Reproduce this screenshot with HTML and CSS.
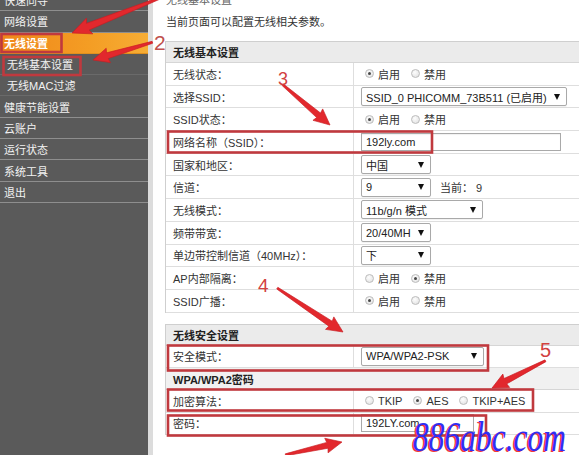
FILE: index.html
```html
<!DOCTYPE html>
<html lang="zh-CN">
<head>
<meta charset="utf-8">
<title>无线基本设置</title>
<link rel="stylesheet" href="styles.css">
</head>
<body>
<div class="page">
  <nav class="sidebar">
    <div class="nav-list">
      <div class="nav-item">快速向导</div>
      <div class="nav-item">网络设置</div>
      <div class="nav-item active">无线设置</div>
      <div class="nav-item sub">无线基本设置</div>
      <div class="nav-item sub">无线MAC过滤</div>
      <div class="nav-item">健康节能设置</div>
      <div class="nav-item">云账户</div>
      <div class="nav-item">运行状态</div>
      <div class="nav-item">系统工具</div>
      <div class="nav-item">退出</div>
    </div>
  </nav>
  <main class="content">
    <h1 class="page-title">无线基本设置</h1>
    <p class="desc">当前页面可以配置无线相关参数。</p>

    <section class="panel">
      <div class="panel-head">无线基本设置</div>
      <div class="row"><div class="label">无线状态：</div><div class="value"><span class="radio on"></span><span class="opt">启用</span><span class="radio"></span><span class="opt">禁用</span></div></div>
      <div class="row"><div class="label">选择SSID：</div><div class="value"><div class="select w206"><span>SSID_0 PHICOMM_73B511 (已启用)</span><span class="caret"></span></div></div></div>
      <div class="row"><div class="label">SSID状态：</div><div class="value"><span class="radio on"></span><span class="opt">启用</span><span class="radio"></span><span class="opt">禁用</span></div></div>
      <div class="row"><div class="label">网络名称（SSID）：</div><div class="value"><div class="text-input w200">192ly.com</div></div></div>
      <div class="row"><div class="label">国家和地区：</div><div class="value"><div class="select w70"><span>中国</span><span class="caret"></span></div></div></div>
      <div class="row"><div class="label">信道：</div><div class="value"><div class="select w70"><span>9</span><span class="caret"></span></div><span class="current">当前： 9</span></div></div>
      <div class="row"><div class="label">无线模式：</div><div class="value"><div class="select w122"><span>11b/g/n 模式</span><span class="caret"></span></div></div></div>
      <div class="row"><div class="label">频带带宽：</div><div class="value"><div class="select w70"><span>20/40MH</span><span class="caret"></span></div></div></div>
      <div class="row"><div class="label">单边带控制信道（40MHz）：</div><div class="value"><div class="select w70"><span>下</span><span class="caret"></span></div></div></div>
      <div class="row"><div class="label">AP内部隔离：</div><div class="value"><span class="radio"></span><span class="opt">启用</span><span class="radio on"></span><span class="opt">禁用</span></div></div>
      <div class="row"><div class="label">SSID广播：</div><div class="value"><span class="radio on"></span><span class="opt">启用</span><span class="radio"></span><span class="opt">禁用</span></div></div>
    </section>

    <section class="panel panel-second">
      <div class="panel-head">无线安全设置</div>
      <div class="row"><div class="label">安全模式：</div><div class="value"><div class="select w123"><span>WPA/WPA2-PSK</span><span class="caret"></span></div></div></div>
      <div class="panel-sub">WPA/WPA2密码</div>
      <div class="row"><div class="label">加密算法：</div><div class="value"><span class="radio"></span><span class="opt">TKIP</span><span class="radio on"></span><span class="opt">AES</span><span class="radio"></span><span class="opt">TKIP+AES</span></div></div>
      <div class="row"><div class="label">密码：</div><div class="value"><div class="text-input w113">192LY.com</div></div></div>
    </section>
  </main>
</div>

<div class="annotations">
  <svg class="marks" width="579" height="455" viewBox="0 0 579 455">
    <g class="boxes">
      <rect x="1.5" y="34" width="60" height="18"/>
      <rect x="3.5" y="57" width="77" height="18"/>
      <rect x="168" y="131.5" width="264" height="21"/>
      <rect x="168" y="345.5" width="320" height="25"/>
      <rect x="168" y="389.5" width="365" height="21"/>
      <rect x="168" y="415.5" width="318" height="20"/>
    </g>
    <g class="arrows">
      <polygon transform="translate(72,33) rotate(158.3)" points="-96,-1 -17,-3.6 -19,-8.5 0,0 -19,8.5 -17,3.6 -96,1"/>
      <polygon transform="translate(93,60) rotate(163.4)" points="-62,-1 -15,-3 -16,-7.5 0,0 -16,7.5 -15,3 -62,1"/>
      <polygon transform="translate(330,125) rotate(40.4)" points="-62,-1 -15,-3 -16,-7.5 0,0 -16,7.5 -15,3 -62,1"/>
      <polygon transform="translate(343,332) rotate(33.7)" points="-79,-1 -15,-3 -16,-7.5 0,0 -16,7.5 -15,3 -79,1"/>
      <polygon transform="translate(492,388) rotate(153)" points="-60,-1 -15,-3 -16,-7.5 0,0 -16,7.5 -15,3 -60,1"/>
      <polygon transform="translate(342,442) rotate(-12.8)" points="-58,-1 -15,-3 -16,-7.5 0,0 -16,7.5 -15,3 -58,1"/>
    </g>
  </svg>
  <span class="num n2">2</span>
  <span class="num n3">3</span>
  <span class="num n4">4</span>
  <span class="num n5">5</span>
  <span class="watermark">886abc.com</span>
</div>
</body>
</html>
```
FILE: styles.css
```css
* { box-sizing: border-box; }
html, body { margin: 0; padding: 0; }
body {
  width: 579px;
  height: 455px;
  overflow: hidden;
  position: relative;
  background: #fff;
  font-family: "Liberation Sans", "Noto Sans CJK SC", sans-serif;
  font-size: 11px;
  color: #333;
}
.page { display: flex; height: 455px; }

/* sidebar */
.sidebar {
  width: 153px;
  flex: none;
  background: #5a5a5a;
  border-right: 5px solid #dcdcdc;
  color: #f2f2f2;
  overflow: hidden;
}
.nav-list { margin-top: -10px; }
.nav-item {
  height: 21.3px;
  border-bottom: 1px solid #8e8e8e;
  padding-left: 4px;
  display: flex;
  align-items: center;
  white-space: nowrap;
}
.nav-item.sub { padding-left: 7px; border-bottom-color: #6a6a6a; }
.nav-item.active {
  background: linear-gradient(to right, #ef861a, #f49d24 60%, #f6ad35);
  color: #fff;
  font-weight: bold;
  border-bottom-color: #e0901e;
}

/* content */
.content { flex: 1; min-width: 0; overflow: hidden; padding-left: 12px; }
.page-title {
  margin: -7px 0 0 1px;
  height: 14px;
  line-height: 14px;
  font-size: 11px;
  font-weight: normal;
  color: #666;
}
.desc { margin: 8px 0 0 1px; line-height: 14px; color: #333; }

.panel {
  width: 440px;
  margin-top: 12px;
  border: 1px solid #cfcfcf;
  border-right: none;
  border-bottom: none;
}
.panel-second { margin-top: 11px; }
.panel-head, .panel-sub {
  height: 21px;
  padding-left: 7px;
  display: flex;
  align-items: center;
  background: #ebebeb;
  color: #222;
  font-weight: bold;
  border-bottom: 1px solid #d6d6d6;
}
.panel-sub { background: #f1f1f1; height: 21.7px; }
.row {
  display: grid;
  grid-template-columns: 188px 1fr;
  height: 22.7px;
  border-bottom: 1px solid #dedede;
}
.label {
  border-right: 1px solid #dedede;
  padding-left: 7px;
  display: flex;
  align-items: center;
  white-space: nowrap;
  color: #333;
}
.value {
  padding-left: 7px;
  display: flex;
  align-items: center;
  white-space: nowrap;
  color: #333;
}

/* radio */
.radio {
  flex: none;
  position: relative;
  width: 9px;
  height: 9px;
  margin: 0 4px;
  border-radius: 50%;
  border: 1px solid #bcbcbc;
  background: radial-gradient(circle at 40% 35%, #fdfdfd, #dedede);
}
.radio.on::after {
  content: "";
  position: absolute;
  left: 2px;
  top: 2px;
  width: 3px;
  height: 3px;
  border-radius: 50%;
  background: #474747;
}
.opt { margin-right: 7px; }

/* select / input */
.select {
  height: 19px;
  border: 1px solid #a9a9a9;
  border-radius: 2px;
  background: #fff;
  display: flex;
  align-items: center;
  justify-content: space-between;
  padding: 0 6px 0 4px;
  color: #222;
  box-shadow: 0 1px 1px rgba(0,0,0,0.06);
}
.caret {
  width: 0;
  height: 0;
  border-left: 3.5px solid transparent;
  border-right: 3.5px solid transparent;
  border-top: 6px solid #111;
}
.text-input {
  height: 18px;
  border: 1px solid #a9a9a9;
  background: #fff;
  padding-left: 4px;
  display: flex;
  align-items: center;
  color: #222;
  box-shadow: inset 0 1px 1px rgba(0,0,0,0.06);
}
.w70 { width: 70px; }
.w113 { width: 113px; }
.w122 { width: 122px; }
.w123 { width: 123px; }
.w200 { width: 200px; }
.w206 { width: 206px; }
.current { margin-left: 9px; }

/* annotations overlay */
.annotations {
  position: absolute;
  left: 0;
  top: 0;
  width: 579px;
  height: 455px;
  pointer-events: none;
}
.marks { position: absolute; left: 0; top: 0; }
.boxes rect { fill: none; stroke: #c0393e; stroke-width: 2.6; }
.arrows polygon { fill: #e2282d; stroke: #c81d22; stroke-width: 0.6; }
.num {
  position: absolute;
  font-family: "Liberation Sans", sans-serif;
  line-height: 1;
  color: #d2413f;
}
.n2 { left: 154px; top: 32px; font-size: 21px; color: #c0504d; }
.n3 { left: 278px; top: 70px; font-size: 18px; }
.n4 { left: 258px; top: 276px; font-size: 19px; }
.n5 { left: 540px; top: 340px; font-size: 20px; }
.watermark {
  position: absolute;
  left: 413px;
  top: 416px;
  font-family: "Liberation Serif", serif;
  font-style: italic;
  font-size: 42px;
  line-height: 42px;
  color: #2f2ff2;
  text-shadow: -2px 1px 0 #f03a3a;
  transform: scaleX(0.75);
  transform-origin: left top;
  white-space: nowrap;
}
```
